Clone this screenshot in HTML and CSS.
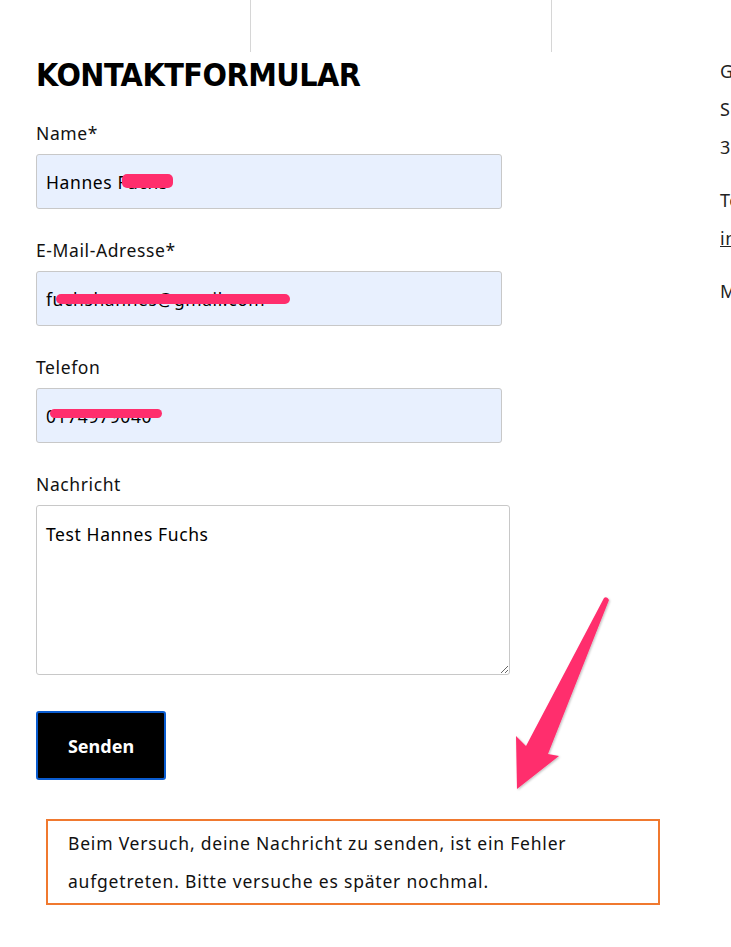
FILE: index.html
```html
<!DOCTYPE html>
<html lang="de">
<head>
    <meta charset="UTF-8">
    <title>Kontaktformular</title>
    <link rel="stylesheet" href="styles.css">
</head>
<body>

<div class="top-bar">
    <div class="top-cell first"></div>
    <div class="top-cell"></div>
    <div class="top-cell"></div>
</div>

<div class="page">
    <div class="form-col">
        <h1 class="title">KONTAKTFORMULAR</h1>
        <form class="contact-form">
            <div class="group">
                <label>Name*</label>
                <div class="field-wrap">
                    <input class="field filled" type="text" value="Hannes Fuchs" readonly>
                    <span class="redact redact-name"></span>
                </div>
            </div>
            <div class="group">
                <label>E-Mail-Adresse*</label>
                <div class="field-wrap">
                    <input class="field filled" type="text" value="fuchshannes@gmail.com" readonly>
                    <span class="redact redact-mail"></span>
                </div>
            </div>
            <div class="group">
                <label>Telefon</label>
                <div class="field-wrap">
                    <input class="field filled tel" type="text" value="0174979040" readonly>
                    <span class="redact redact-tel"></span>
                </div>
            </div>
            <div class="group">
                <label>Nachricht</label>
                <textarea class="message" readonly>Test Hannes Fuchs</textarea>
            </div>
            <button class="send-btn" type="button">Senden</button>
        </form>
        <div class="error-box">
            Beim Versuch, deine Nachricht zu senden, ist ein Fehler aufgetreten. Bitte versuche es später nochmal.
        </div>
    </div>

    <div class="aside">
        <p>Gemeindeverwaltung<br>Schulstraße 12<br>35037 Marburg</p>
        <p>Tel.: 06421 123456<br><a href="#">info@gemeinde.de</a></p>
        <p>Mo-Fr 8-12 Uhr</p>
    </div>

    <!-- annotation arrow -->
    <svg class="arrow" width="120" height="210" viewBox="500 590 120 210">
        <defs>
            <filter id="shadow" x="-20%" y="-20%" width="140%" height="140%">
                <feDropShadow dx="1" dy="1" stdDeviation="1" flood-color="#000" flood-opacity="0.25"/>
            </filter>
        </defs>
        <path filter="url(#shadow)" fill="#ff2e6d"
              d="M604 598 Q607 596 609 600 L548 754 L559 756 L517 789 L516 736 L526 746 Z"/>
    </svg>
</div>

</body>
</html>
```

FILE: styles.css
```css
html, body, div, p, h1, form, label {
    margin: 0;
    padding: 0;
}
body {
    font-family: "Noto Sans", sans-serif;
    letter-spacing: 0.6px;
    color: #111;
    background: #fff;
    overflow: hidden;
}
.top-bar {
    display: flex;
    height: 52px;
}
.top-cell {
    flex-shrink: 0;
    width: 300px;
    border-left: 1px solid #d6d6d6;
}
.top-cell.first {
    width: 250px;
    border-left: none;
}
.page {
    position: relative;
    display: flex;
    padding-left: 36px;
}
.form-col {
    width: 474px;
    flex-shrink: 0;
}
.title {
    margin-top: 3px;
    font-family: "DejaVu Sans Condensed", sans-serif;
    font-weight: bold;
    font-size: 32px;
    line-height: 40px;
    letter-spacing: -0.5px;
    color: #000;
}
.contact-form {
    padding-top: 25px;
}
.group {
    margin-bottom: 28px;
}
.group label {
    display: block;
    font-size: 17.5px;
    line-height: 26px;
    margin-bottom: 8px;
}
.field-wrap {
    position: relative;
    width: 466px;
}
.field {
    box-sizing: border-box;
    width: 466px;
    height: 55px;
    padding: 0 9px;
    border: 1px solid #c8c8c8;
    border-radius: 3px;
    font-family: "Noto Sans", sans-serif;
    font-size: 17.5px;
    letter-spacing: 0.6px;
    color: #000;
    outline: none;
}
.field.filled {
    background: #e8f0fe;
}
.redact {
    position: absolute;
    background: #ff2e6d;
    border-radius: 5px;
}
.redact-name {
    left: 86px;
    top: 20px;
    width: 51px;
    height: 14px;
}
.redact-mail {
    left: 20px;
    top: 23px;
    width: 234px;
    height: 10px;
}
.redact-tel {
    left: 14px;
    top: 21px;
    width: 112px;
    height: 9px;
}
.message {
    display: block;
    box-sizing: border-box;
    width: 474px;
    height: 170px;
    margin-top: 1px;
    padding: 16px 9px;
    border: 1px solid #c8c8c8;
    border-radius: 3px;
    font-family: "Noto Sans", sans-serif;
    font-size: 17.5px;
    letter-spacing: 0.6px;
    color: #000;
    outline: none;
    resize: both;
}
.send-btn {
    display: block;
    margin-top: 36px;
    width: 130px;
    height: 69px;
    background: #000;
    color: #fff;
    border: 2px solid #0a5cd0;
    border-radius: 3px;
    font-family: "Noto Sans", sans-serif;
    font-weight: bold;
    font-size: 18px;
}
.error-box {
    margin: 39px 0 0 10px;
    width: 614px;
    box-sizing: border-box;
    padding: 3px 20px;
    border: 2px solid #f0792f;
    font-size: 17.5px;
    letter-spacing: 0.8px;
    line-height: 38px;
    color: #111;
}
.aside {
    margin-left: 210px;
    font-size: 18px;
    line-height: 38px;
    white-space: nowrap;
    color: #222;
}
.aside p {
    margin-bottom: 15px;
}
.aside a {
    color: #222;
}
.arrow {
    position: absolute;
    left: 500px;
    top: 538px;
}
```
